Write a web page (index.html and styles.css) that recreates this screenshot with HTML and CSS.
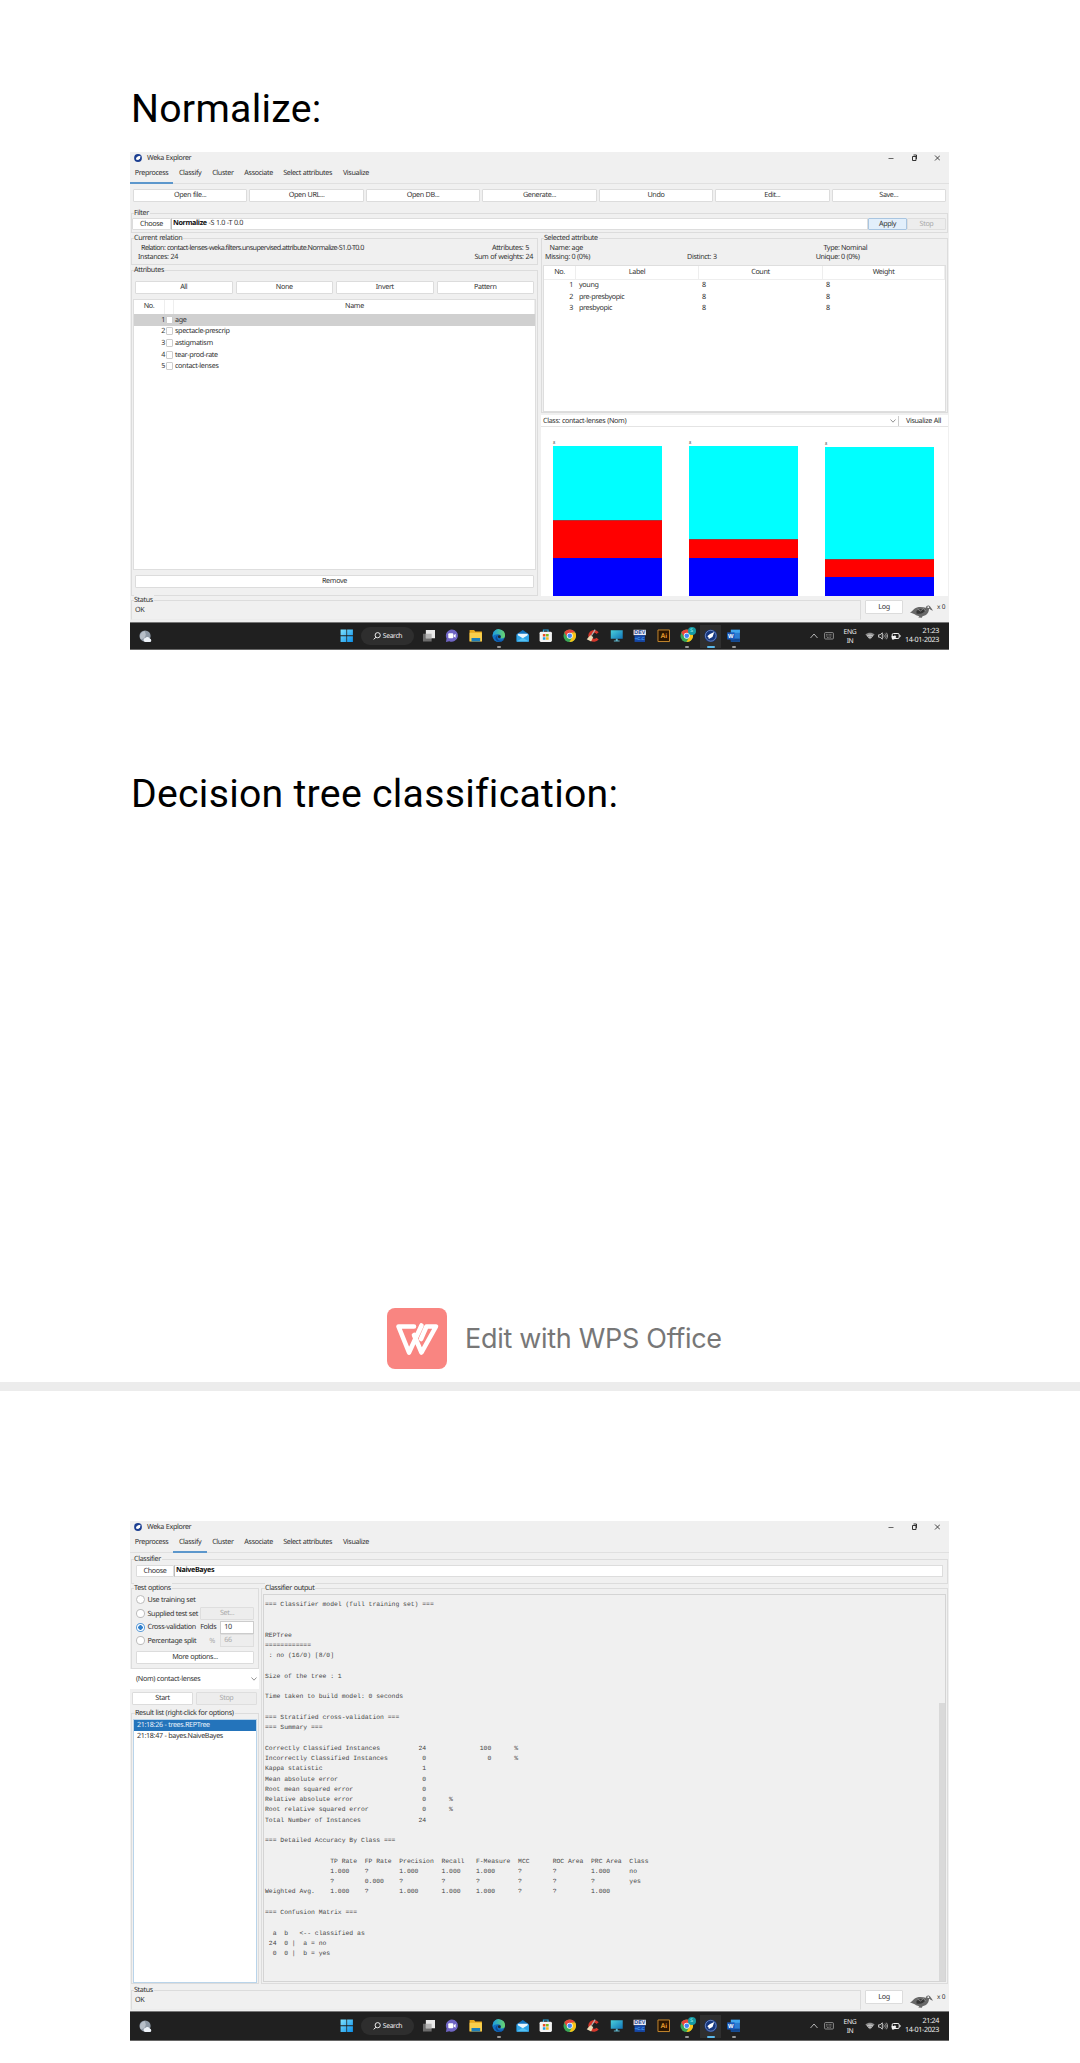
FILE: index.html
```
<!DOCTYPE html>
<html lang="en">
<head>
<meta charset="utf-8">
<title>Weka lab report</title>
<link rel="stylesheet" href="styles.css">
</head>
<body>
<svg class="defs" width="0" height="0">
  <defs>
    <linearGradient id="g-win" x1="0" y1="0" x2="1" y2="1"><stop offset="0" stop-color="#7fe3ff"/><stop offset="1" stop-color="#0a8ee8"/></linearGradient>
    <linearGradient id="g-edge" x1="0" y1="0" x2="1" y2="0"><stop offset="0" stop-color="#1c9de0"/><stop offset="1" stop-color="#6ad66a"/></linearGradient>
    <linearGradient id="g-mon" x1="0" y1="0" x2="1" y2="1"><stop offset="0" stop-color="#49d0dc"/><stop offset="1" stop-color="#1274b8"/></linearGradient>
  </defs>
  <symbol id="i-weka" viewBox="0 0 14 14"><circle cx="7" cy="7" r="6.6" fill="#16377f"/><circle cx="7" cy="7" r="5.6" fill="none" stroke="#8fa6d6" stroke-width=".7"/><path d="M10.6 3 8.8 8.4 6.8 9.3 5 10.4 4.6 8.6 3.4 7.4 5.8 5.4Z" fill="#fff"/></symbol>
  <symbol id="i-logo" viewBox="0 0 14 14"><circle cx="7" cy="7" r="6.800" fill="#1c3f92"/><path d="M11.500 3 10.500 8 7.500 10.500 4 10 3.500 7 7 4Z" fill="#fff"/></symbol>
  <symbol id="i-weather" viewBox="0 0 14 14"><circle cx="6.5" cy="6.5" r="6" fill="#8e99a6"/><path d="M6 1a6 6 0 0 0-4 9c4 0 7-4 4-9Z" fill="#b6bec8"/><path d="M6.5 13a2.2 2.2 0 0 1 .3-4.3 2.8 2.8 0 0 1 4.8.5A2 2 0 0 1 12 13Z" fill="#edf2f8"/></symbol>
  <symbol id="i-win" viewBox="0 0 14 14"><path d="M.6.4h6v6.1h-6ZM7.4.4h6v6.1h-6ZM.6 7.4h6v6.2h-6ZM7.4 7.4h6v6.2h-6Z" fill="url(#g-win)"/></symbol>
  <symbol id="i-task" viewBox="0 0 14 14"><path d="M1 5h9v8H1Z" fill="#6c6c6c"/><path d="M4 1h9.500v8.500H4Z" fill="#e9e9e9"/><path d="M4 5h6v4.500H4Z" fill="#b5b5b5"/></symbol>
  <symbol id="i-chat" viewBox="0 0 14 14"><path d="M7 .6a6.300 6.300 0 1 1-2.600 12L1 13.400l.6-3.600A6.300 6.300 0 0 1 7 .6Z" fill="#6f65c4"/><rect x="3.400" y="4.400" width="5.200" height="5.200" rx="1" fill="#fff"/><path d="m9 6.400 2-1.500v4.300L9 7.700Z" fill="#fff"/></symbol>
  <symbol id="i-folder" viewBox="0 0 14 14"><path d="M.6 1h4.700l1.200 1.600h6.900V13H.6Z" fill="#e9a91e"/><path d="M.6 4h12.800v8.800H.6Z" fill="#fbd04c"/><path d="M2.600 13V9.300h9V13Z" fill="#1f7fb8"/></symbol>
  <symbol id="i-edge" viewBox="0 0 14 14"><circle cx="7" cy="7" r="6.500" fill="#126fc0"/><path d="M.8 6A6.300 6.300 0 0 1 13.500 7c0 2.500-2.500 3.300-4.800 2.600 1-1.300.6-3.900-2.200-4.100C4 5.300 1.800 6 .8 8Z" fill="url(#g-edge)"/><path d="M6.200 6.400c-1.500 1.300-1 4.600 1.800 5.500 1.800.5 3.300 0 4.400-.8-2.500 3.400-8 2.600-8.800-1C3.300 8.200 4.600 6.800 6.200 6.400Z" fill="#0b4a96"/><circle cx="7.600" cy="8" r="1.500" fill="#20242a"/></symbol>
  <symbol id="i-mail" viewBox="0 0 14 14"><path d="M.6 5.500 7 1l6.400 4.500V13H.6Z" fill="#1272bd"/><path d="M1.800 5h10.400v5H1.800Z" fill="#eaf6fd"/><path d="M.6 5.600 7 9.600l6.400-4V13H.6Z" fill="#2fa4e7"/><path d="M.6 13 7 9l6.400 4Z" fill="#52c1f4"/></symbol>
  <symbol id="i-store" viewBox="0 0 14 14"><path d="M4.600 3V1h4.800v2" fill="none" stroke="#2aa3d8" stroke-width="1.200"/><rect x=".6" y="2.800" width="12.800" height="10.600" rx="1.500" fill="#f4f4f4"/><path d="M4 5.200h2.700v2.700H4Z" fill="#e8502a"/><path d="M7.300 5.200H10v2.700H7.300Z" fill="#7eb61b"/><path d="M4 8.500h2.700v2.700H4Z" fill="#229fe0"/><path d="M7.300 8.500H10v2.700H7.300Z" fill="#f5b81c"/></symbol>
  <symbol id="i-chrome" viewBox="0 0 14 14"><circle cx="7" cy="7" r="6.500" fill="#3aa757"/><path d="M1.370 3.750A6.500 6.500 0 0 1 12.630 3.750L7 4.500 4.400 8.500Z" fill="#e8453c"/><path d="M12.630 3.750A6.500 6.500 0 0 1 6.700 13.500L9.600 8.500 8.500 3.750Z" fill="#fbc116"/><circle cx="7" cy="7" r="3.100" fill="#fff"/><circle cx="7" cy="7" r="2.400" fill="#4285f4"/></symbol>
  <symbol id="i-cc" viewBox="0 0 14 14"><path d="M12 4.200A4.600 4.600 0 1 0 12 10" fill="none" stroke="#d3362b" stroke-width="3"/><path d="M9.500.6 5.600 7" stroke="#b8b8b8" stroke-width="1.200"/><path d="m4.500 6.400 3 2-2.200 4.600-4.500-2.400Z" fill="#eddcb8"/></symbol>
  <symbol id="i-mon" viewBox="0 0 14 14"><path d="M.8 1.400h12.400v8.800H.8Z" fill="url(#g-mon)"/><path d="M6 10h2v2H6ZM4 12h6v1H4Z" fill="#5fb6cc"/></symbol>
  <symbol id="i-bird" viewBox="0 0 24 16"><path d="M.5 9.500C3 8.500 4 5.500 7.500 4.500c3.500-1 6-.2 9 .2 0-1.600 1.600-2.600 3.200-2 1.400.8 2.200 2.600 3.800 5-2-.4-3-1.800-4-2C19.500 9 17.500 12.500 13 13.200l-.6 1.500-3.600-.2 1-1.300C6.500 12.800 5 10.600.5 9.500Z" fill="#686868"/><path d="M7 8c3-2.500 7-2 9-1.500-1 3.500-5 5-9 4Z" fill="#353535"/><path d="M8 6 11 8l3-2.500 2 2.500" stroke="#999" fill="none" stroke-width=".8"/><circle cx="18.800" cy="4.200" r=".9" fill="#eee"/></symbol>
  <symbol id="i-kbd" viewBox="0 0 10 8"><rect x=".6" y=".6" width="8.800" height="6.400" rx=".8" fill="none" stroke="#a5a5a5" stroke-width=".8"/><path d="M2 2.600h6M2 4h6M3 5.500h4" stroke="#a5a5a5" stroke-width=".7" stroke-dasharray=".9 .5"/></symbol>
  <symbol id="i-wifi" viewBox="0 0 10 8"><path d="M5 7.600.4 2.600C3 .1 7 .1 9.600 2.600Z" fill="#8b8b8b"/><path d="M2 4.200c1.700-1.500 4.300-1.500 6 0M3.400 5.700c1-.8 2.200-.8 3.200 0" fill="none" stroke="#e8e8e8" stroke-width=".8"/></symbol>
  <symbol id="i-vol" viewBox="0 0 10 8"><path d="M.6 2.800h1.500L4.300.8v6.400L2.100 5.200H.6Z" fill="none" stroke="#ededed" stroke-width=".8"/><path d="M5.600 2.500c.8.900.8 2.100 0 3M7 1.500c1.500 1.500 1.500 3.500 0 5M8.300.7c1.700 2 1.700 4.600 0 6.600" fill="none" stroke="#d4d4d4" stroke-width=".7"/></symbol>
  <symbol id="i-bat" viewBox="0 0 10 8"><rect x="1.200" y="1.500" width="7" height="5" rx="1.300" fill="none" stroke="#f2f2f2" stroke-width="1"/><path d="M8.600 3h.9v2h-.9Z" fill="#f2f2f2"/><path d="M.6 4h3V2.600L5.400 5 3 7.600H1Z" fill="#f2f2f2"/></symbol>
</svg>

<main class="doc">
  <h1 class="heading heading-first">Normalize:</h1>

  <section class="shot shot-pre">
    <div class="app">
      <header class="titlebar"><svg class="logo"><use href="#i-logo"/></svg><span>Weka Explorer</span>
        <svg class="winctl" viewBox="0 0 52 8"><path d="M.5 4.500h5" stroke="#666"/><path d="M24.500 2.500h3.500v4h-3.500ZM25.500 1h3v4" fill="none" stroke="#333" stroke-width="1"/><path d="m47 1.500 5 5m0-5-5 5" stroke="#333" stroke-width=".9"/></svg>
      </header>
      <nav class="tabs"><span class="on">Preprocess</span><span>Classify</span><span>Cluster</span><span>Associate</span><span>Select attributes</span><span>Visualize</span></nav>
      <div class="toolbar"><b>Open file...</b><b>Open URL...</b><b>Open DB...</b><b>Generate...</b><b>Undo</b><b>Edit...</b><b>Save...</b></div>

      <div class="group filter">
        <span class="legend">Filter</span>
        <div class="chooser"><b class="btn">Choose</b><div class="field"><strong>Normalize</strong> -S 1.0 -T 0.0</div><b class="btn apply">Apply</b><b class="btn off">Stop</b></div>
      </div>

      <div class="split">
        <div class="left">
          <div class="group relation">
            <span class="legend">Current relation</span>
            <div class="pair"><span class="in">Relation: contact-lenses-weka.filters.unsupervised.attribute.Normalize-S1.0-T0.0</span><span class="in2">Attributes: 5</span></div>
            <div class="pair"><span>Instances: 24</span><span>Sum of weights: 24</span></div>
          </div>
          <div class="group attrs">
            <span class="legend">Attributes</span>
            <div class="four"><b class="btn">All</b><b class="btn">None</b><b class="btn">Invert</b><b class="btn">Pattern</b></div>
            <div class="table">
              <div class="arow head"><span>No.</span><span></span><span>Name</span></div>
              <div class="arow sel"><span>1</span><i></i><span>age</span></div>
              <div class="arow"><span>2</span><i></i><span>spectacle-prescrip</span></div>
              <div class="arow"><span>3</span><i></i><span>astigmatism</span></div>
              <div class="arow"><span>4</span><i></i><span>tear-prod-rate</span></div>
              <div class="arow"><span>5</span><i></i><span>contact-lenses</span></div>
            </div>
            <b class="btn remove">Remove</b>
          </div>
        </div>
        <div class="right">
          <div class="group selected">
            <span class="legend">Selected attribute</span>
            <div class="facts"><span class="k">Name:</span><span>age</span><span></span><span class="k">Type:</span><span>Nominal</span>
              <span class="k">Missing:</span><span>0 (0%)</span><span>Distinct: 3</span><span class="k">Unique:</span><span>0 (0%)</span></div>
            <div class="table">
              <div class="lrow head"><span>No.</span><span>Label</span><span>Count</span><span>Weight</span></div>
              <div class="lrow"><span>1</span><span>young</span><span>8</span><span>8</span></div>
              <div class="lrow"><span>2</span><span>pre-presbyopic</span><span>8</span><span>8</span></div>
              <div class="lrow"><span>3</span><span>presbyopic</span><span>8</span><span>8</span></div>
            </div>
          </div>
          <div class="classbar"><span>Class: contact-lenses (Nom)</span><svg class="chev" viewBox="0 0 6 4"><path d="m.5.500 2.500 2.700L5.500.5" fill="none" stroke="#777" stroke-width=".8"/></svg><b>Visualize All</b></div>
          <div class="chart">
            <div class="bar"><em>8</em><i class="c" style="height:74.500px"></i><i class="r" style="height:37.500px"></i><i class="b" style="height:38.500px"></i></div>
            <div class="bar"><em>8</em><i class="c" style="height:93px"></i><i class="r" style="height:18.500px"></i><i class="b" style="height:38.500px"></i></div>
            <div class="bar"><em>8</em><i class="c" style="height:112px"></i><i class="r" style="height:18.500px"></i><i class="b" style="height:19px"></i></div>
          </div>
        </div>
      </div>

      <footer class="status"><div class="group"><span class="legend">Status</span><p>OK</p></div><b class="btn">Log</b><svg class="bird"><use href="#i-bird"/></svg><span>x 0</span></footer>
    </div>
    <div class="taskbar">
      <svg class="weather"><use href="#i-weather"/></svg>
      <div class="dock">
        <span><svg><use href="#i-win"/></svg></span>
        <div class="search"><svg viewBox="0 0 8 8"><circle cx="4.700" cy="3.200" r="2.600" fill="none" stroke="#fff" stroke-width=".9"/><path d="M2.900 5.200.8 7.400" stroke="#fff"/></svg>Search</div>
        <span><svg><use href="#i-task"/></svg></span><span><svg><use href="#i-chat"/></svg></span><span><svg><use href="#i-folder"/></svg></span><span class="run"><svg><use href="#i-edge"/></svg></span><span><svg><use href="#i-mail"/></svg></span><span><svg><use href="#i-store"/></svg></span><span><svg><use href="#i-chrome"/></svg></span><span><svg><use href="#i-cc"/></svg></span><span><svg><use href="#i-mon"/></svg></span>
        <span><svg viewBox="0 0 14 14"><path d="M.6.8h12.800v5.600H.6Z" fill="#e9ecf6"/><path d="M1.600 6.400h10.800v7H1.600Z" fill="#1648a8"/><text x="7" y="5.600" class="ico-dev">DEV</text><text x="7" y="11.600" class="ico-cpp">+C.C</text></svg></span>
        <span><svg viewBox="0 0 14 14"><path d="M1 1h12v12H1Z" fill="#2b1600" stroke="#c98a2e" stroke-width="1"/><text x="7" y="9.600" class="ico-ai">Ai</text></svg></span>
        <span class="run badge"><svg><use href="#i-chrome"/></svg></span><span class="run cur"><svg><use href="#i-weka"/></svg></span>
        <span class="run"><svg viewBox="0 0 14 14"><path d="M4 .8h9.400v12.400H4Z" fill="#2b7cd3"/><path d="M4 .8h9.400v3.100H4Z" fill="#41a5ee"/><path d="M4 10h9.400v3.200H4Z" fill="#12468f"/><path d="M.2 3.500h7.600v7.400H.2Z" fill="#185abd"/><text x="4" y="9.200" class="ico-word">W</text></svg></span>
      </div>
      <div class="tray"><svg viewBox="0 0 10 8"><path d="m1.500 6 3.500-4L8.500 6" fill="none" stroke="#d8d8d8" stroke-width=".8"/></svg><svg><use href="#i-kbd"/></svg><p class="lang">ENG<br>IN</p><svg><use href="#i-wifi"/></svg><svg><use href="#i-vol"/></svg><svg><use href="#i-bat"/></svg><p class="clock">21:23<br>14-01-2023</p></div>
    </div>
  </section>

  <h1 class="heading heading-second">Decision tree classification:</h1>

  <div class="wps"><svg viewBox="0 0 60 61"><rect width="60" height="61" rx="8" fill="#f98581"/><path d="M27 18.500H11.500L22 44.500 34.500 17.500M27 27l7.500 17.500L49 18.500H39.500L34 31" fill="none" stroke="#fff" stroke-width="4.600" stroke-linejoin="round" stroke-linecap="round"/></svg><span>Edit with WPS Office</span></div>
  <hr class="pagebreak">

  <section class="shot shot-cls">
    <div class="app">
      <header class="titlebar"><svg class="logo"><use href="#i-logo"/></svg><span>Weka Explorer</span>
        <svg class="winctl" viewBox="0 0 52 8"><path d="M.5 4.500h5" stroke="#666"/><path d="M24.500 2.500h3.500v4h-3.500ZM25.500 1h3v4" fill="none" stroke="#333" stroke-width="1"/><path d="m47 1.500 5 5m0-5-5 5" stroke="#333" stroke-width=".9"/></svg>
      </header>
      <nav class="tabs"><span>Preprocess</span><span class="on">Classify</span><span>Cluster</span><span>Associate</span><span>Select attributes</span><span>Visualize</span></nav>
      <div class="group classifier">
        <span class="legend">Classifier</span>
        <div class="chooser"><b class="btn">Choose</b><div class="field"><strong>NaiveBayes</strong></div></div>
      </div>
      <div class="work">
        <div class="side">
          <div class="group options">
            <span class="legend">Test options</span>
            <div class="opt"><i></i><span>Use training set</span></div>
            <div class="opt"><i></i><span>Supplied test set</span><b class="btn off wide">Set...</b></div>
            <div class="opt"><i class="checked"></i><span>Cross-validation</span><em>Folds</em><b class="input">10</b></div>
            <div class="opt"><i></i><span>Percentage split</span><em class="dim">%</em><b class="input off">66</b></div>
            <b class="btn more">More options...</b>
          </div>
          <div class="combo"><span>(Nom) contact-lenses</span><svg class="chev" viewBox="0 0 6 4"><path d="m.5.500 2.500 2.700L5.500.5" fill="none" stroke="#777" stroke-width=".8"/></svg></div>
          <div class="run-row"><b class="btn">Start</b><b class="btn off">Stop</b></div>
          <div class="group results">
            <span class="legend">Result list (right-click for options)</span>
            <ul><li class="sel">21:18:26 - trees.REPTree</li><li>21:18:47 - bayes.NaiveBayes</li></ul>
          </div>
        </div>
        <div class="group output">
          <span class="legend">Classifier output</span>
          <div class="console"><pre>=== Classifier model (full training set) ===


REPTree
============
 : no (16/0) [8/0]

Size of the tree : 1

Time taken to build model: 0 seconds

=== Stratified cross-validation ===
=== Summary ===

Correctly Classified Instances          24              100      %
Incorrectly Classified Instances         0                0      %
Kappa statistic                          1
Mean absolute error                      0
Root mean squared error                  0
Relative absolute error                  0      %
Root relative squared error              0      %
Total Number of Instances               24

=== Detailed Accuracy By Class ===

                 TP Rate  FP Rate  Precision  Recall   F-Measure  MCC      ROC Area  PRC Area  Class
                 1.000    ?        1.000      1.000    1.000      ?        ?         1.000     no
                 ?        0.000    ?          ?        ?          ?        ?         ?         yes
Weighted Avg.    1.000    ?        1.000      1.000    1.000      ?        ?         1.000

=== Confusion Matrix ===

  a  b   &lt;-- classified as
 24  0 |  a = no
  0  0 |  b = yes</pre><div class="thumb"></div></div>
        </div>
      </div>
      <footer class="status"><div class="group"><span class="legend">Status</span><p>OK</p></div><b class="btn">Log</b><svg class="bird"><use href="#i-bird"/></svg><span>x 0</span></footer>
    </div>
    <div class="taskbar">
      <svg class="weather"><use href="#i-weather"/></svg>
      <div class="dock">
        <span><svg><use href="#i-win"/></svg></span>
        <div class="search"><svg viewBox="0 0 8 8"><circle cx="4.700" cy="3.200" r="2.600" fill="none" stroke="#fff" stroke-width=".9"/><path d="M2.900 5.200.8 7.400" stroke="#fff"/></svg>Search</div>
        <span><svg><use href="#i-task"/></svg></span><span><svg><use href="#i-chat"/></svg></span><span><svg><use href="#i-folder"/></svg></span><span class="run"><svg><use href="#i-edge"/></svg></span><span><svg><use href="#i-mail"/></svg></span><span><svg><use href="#i-store"/></svg></span><span><svg><use href="#i-chrome"/></svg></span><span><svg><use href="#i-cc"/></svg></span><span><svg><use href="#i-mon"/></svg></span>
        <span><svg viewBox="0 0 14 14"><path d="M.6.8h12.800v5.600H.6Z" fill="#e9ecf6"/><path d="M1.600 6.400h10.800v7H1.600Z" fill="#1648a8"/><text x="7" y="5.600" class="ico-dev">DEV</text><text x="7" y="11.600" class="ico-cpp">+C.C</text></svg></span>
        <span><svg viewBox="0 0 14 14"><path d="M1 1h12v12H1Z" fill="#2b1600" stroke="#c98a2e" stroke-width="1"/><text x="7" y="9.600" class="ico-ai">Ai</text></svg></span>
        <span class="run badge"><svg><use href="#i-chrome"/></svg></span><span class="run cur"><svg><use href="#i-weka"/></svg></span>
        <span class="run"><svg viewBox="0 0 14 14"><path d="M4 .8h9.400v12.400H4Z" fill="#2b7cd3"/><path d="M4 .8h9.400v3.100H4Z" fill="#41a5ee"/><path d="M4 10h9.400v3.200H4Z" fill="#12468f"/><path d="M.2 3.500h7.600v7.400H.2Z" fill="#185abd"/><text x="4" y="9.200" class="ico-word">W</text></svg></span>
      </div>
      <div class="tray"><svg viewBox="0 0 10 8"><path d="m1.500 6 3.500-4L8.500 6" fill="none" stroke="#d8d8d8" stroke-width=".8"/></svg><svg><use href="#i-kbd"/></svg><p class="lang">ENG<br>IN</p><svg><use href="#i-wifi"/></svg><svg><use href="#i-vol"/></svg><svg><use href="#i-bat"/></svg><p class="clock">21:24<br>14-01-2023</p></div>
    </div>
  </section>
</main>
</body>
</html>
```

FILE: styles.css
```
* { box-sizing: border-box; margin: 0; padding: 0; }
body { background: #fff; color: #000; font-family: "Noto Sans", sans-serif; }
.defs { position: absolute; }
.doc { width: 1080px; height: 2063px; overflow: hidden; display: flex; flex-direction: column; }
.doc > * { flex: none; }

.heading { font: 400 39.2px/46px Roboto, sans-serif; padding-left: 131px; white-space: nowrap; letter-spacing: .28px; }
.heading-first { margin-top: 86px; }
.heading-second { margin-top: 121px; }

/* application window */
.shot { width: 819px; margin-left: 130px; font-size: 7.200px; line-height: 10px; letter-spacing: -.36px; word-spacing: .3px; text-rendering: geometricPrecision; color: #333; white-space: nowrap; display: flex; flex-direction: column; }
.shot b { font-weight: 400; }
.shot-pre { height: 498px; margin-top: 20px; }
.shot-cls { height: 520px; margin-top: 130px; }
.app { background: #f0f0f0; flex: 1; display: flex; flex-direction: column; min-height: 0; }
.titlebar { height: 12px; display: flex; align-items: center; padding: 0 9px 0 4px; gap: 5px; flex: none; }
.logo { width: 8px; height: 8px; }
.winctl { width: 52px; height: 8px; margin-left: auto; }
.tabs { height: 20px; display: flex; border-bottom: 1px solid #e0e0e0; flex: none; }
.tabs span { text-align: center; padding-top: 4px; height: 20px; width: 43.300px; }
.tabs span:nth-child(2) { width: 33.600px; }
.tabs span:nth-child(3) { width: 32px; }
.tabs span:nth-child(4) { width: 39.500px; }
.tabs span:nth-child(5) { width: 58.500px; }
.tabs span:nth-child(6) { width: 38px; }
.tabs .on { border-bottom: 2px solid #5c97cc; }
.toolbar { display: grid; grid-template-columns: repeat(7, 1fr); gap: 2px; padding: 5px 3px 0; height: 18px; flex: none; }
.toolbar b, .btn { background: #fff; border: 1px solid #dcdcdc; border-radius: 1px; text-align: center; height: 13px; line-height: 11px; display: block; }
.btn.off, .input.off { background: #ededed; color: #aaa; border-color: #dedede; }
.btn.apply { background: #e2effb; border-color: #a9c5e0; }

.group { border: 1px solid #dcdcdc; min-width: 0; }
.legend { display: block; width: fit-content; height: 10px; margin: -6px 0 0 2px; padding-right: 1px; background: #f0f0f0; }
.filter { margin: 11px 1px 0; height: 20px; padding-right: 1px; flex: none; }
.chooser { display: flex; }
.filter .btn { height: 12px; line-height: 10px; }
.filter .btn:first-child { width: 39px; }
.filter .btn.apply { width: 39px; }
.filter .btn.off { width: 39px; }
.field { flex: 1; background: #fff; border: 1px solid #ddd; border-left-color: #bbb; height: 12px; line-height: 9.500px; padding-left: 1px; }
.field strong { color: #111; font-weight: 700; }

.split { display: flex; margin-top: 5px; height: 358px; flex: none; }
.left { width: 408px; padding-left: 1px; }
.relation { height: 27px; }
.pair { display: flex; justify-content: space-between; height: 9px; line-height: 9px; padding: 0 4px 0 6px; }
.pair:nth-child(2) { margin-top: 1px; }
.pair .in { padding-left: 3px; letter-spacing: -.585px; }
.pair .in2 { padding-right: 4px; }
.attrs { margin-top: 5px; height: 326px; padding: 0 1px; }
.attrs .legend { margin-left: 1px; }
.four { display: grid; grid-template-columns: repeat(4, 1fr); gap: 3px; padding: 0 2px; margin-top: 6px; }
.table { background: #fff; border: 1px solid #dedede; }
.attrs .table { margin-top: 5px; height: 271px; }
.arow { display: grid; grid-template-columns: 31px 9px 1fr; height: 11.600px; align-items: center; }
.arow span:first-child { text-align: right; }
.arow i { width: 7px; height: 8px; background: #fff; border: 1px solid #ccc; border-radius: 1px; margin-left: 1px; }
.arow span:last-child { padding-left: 1px; }
.arow.head { height: 14px; align-items: stretch; line-height: 13px; }
.arow.head span, .arow.head span:first-child { text-align: center; border-right: 1px solid #eee; }
.arow.sel { background: #d0d0d0; }
.remove { margin: 5px 2px 0; }

.right { flex: 1; padding: 0 1px 0 3px; display: flex; flex-direction: column; }
.selected { height: 175px; flex: none; }
.facts { display: grid; grid-template-columns: 28px 114px 119px 32px 1fr; column-gap: 1.500px; line-height: 9px; height: 18px; margin-top: 1px; grid-template-rows: 9px 9px; }
.facts .k { text-align: right; }
.selected .table { margin: 3px 1px 0; height: 147px; }
.lrow { display: grid; grid-template-columns: 32px 123px 124px 1fr; height: 11.500px; line-height: 11.500px; }
.lrow span { padding-left: 3px; }
.lrow span:first-child { text-align: right; padding: 0 3px 0 0; }
.lrow.head { height: 14px; line-height: 13px; border-bottom: 1px solid #eee; }
.lrow.head span, .lrow.head span:first-child { text-align: center; border-right: 1px solid #eee; padding: 0; }
.classbar { height: 12px; margin-top: 2px; background: #fff; display: flex; align-items: center; padding-left: 2px; border-bottom: 1px solid #e4e4e4; flex: none; }
.chev { width: 6px; height: 4px; margin-left: auto; margin-right: 2px; }
.classbar b { width: 50px; text-align: center; border-left: 1px solid #ccc; }
.chart { background: #fff; flex: 1; display: grid; grid-template-columns: repeat(3, 109px); column-gap: 27px; padding-left: 12px; align-items: end; }
.bar { display: flex; flex-direction: column; }
.bar em { font: 400 4px/4px "Noto Sans", sans-serif; height: 4px; }
.bar i { display: block; }
.bar .c { background: #0ff; }
.bar .r { background: #f00; border-top: 1px solid #a33; }
.bar .b { background: #00f; }

.status { display: flex; padding: 4px 3px 0 1px; height: 26px; flex: none; margin-top: auto; }
.status .group { width: 730px; height: 20px; border-bottom-color: #ececec; }
.status p { padding-left: 3px; }
.status .btn { width: 38px; height: 14px; line-height: 12px; margin: 0 6px 0 4px; }
.bird { width: 25px; height: 16px; margin-top: 3px; }
.status > span { margin: 2px 0 0 3px; font-size: 6.500px; }

/* Windows taskbar */
.taskbar { height: 28px; background: #202020; border-top: 1px solid #777; border-bottom: 1px solid #666; display: grid; grid-template-columns: 205px 1fr auto; align-items: center; color: #eee; flex: none; }
.shot-cls .taskbar { height: 30px; }
.weather { width: 13px; height: 13px; margin-left: 9px; }
.dock { display: flex; align-items: center; height: 100%; }
.dock > span { width: 23.500px; height: 23px; display: grid; place-items: center; position: relative; }
.dock > span svg { width: 13.500px; height: 13.500px; }
.search { width: 53px; height: 18px; border-radius: 9px; background: #2e2e2e; margin: 0 2.500px 0 2.500px; display: flex; align-items: center; justify-content: center; gap: 2px; font-size: 6.800px; }
.search svg { width: 8px; height: 8px; }
.dock .run::after { content: ""; position: absolute; left: 10px; bottom: 0; width: 4px; height: 2px; background: #999; border-radius: 1px; }
.dock .cur { background: linear-gradient(#2f2f2f, #2f2f2f) center / 21px 100% no-repeat; }
.dock .cur::after { left: 8px; width: 8px; background: #5bb8ea; }
.dock .badge::before { content: "S"; position: absolute; right: 3px; top: 2px; width: 8px; height: 8px; border-radius: 4px; background: #159aa3; z-index: 1; font-size: 5px; line-height: 8px; text-align: center; color: #bff; }
.tray { display: flex; align-items: center; padding-right: 10px; line-height: 9px; }
.tray svg { width: 10px; height: 8px; margin-right: 3px; }
.tray svg:nth-child(1) { margin-right: 5px; }
.tray .lang { width: 18px; text-align: center; margin: 0 6px 0 4px; font-size: 6.800px; }
.tray .clock { text-align: right; margin-left: 1px; width: 34px; }
.ico-dev { font: 700 5.500px "Liberation Sans", sans-serif; fill: #1d3f8f; text-anchor: middle; letter-spacing: 0; }
.ico-cpp { font: 700 4.500px "Liberation Sans", sans-serif; fill: #4aa0f0; text-anchor: middle; letter-spacing: 0; }
.ico-ai { font: 700 7px "Liberation Sans", sans-serif; fill: #f0a030; text-anchor: middle; letter-spacing: 0; }
.ico-word { font: 700 6px "Liberation Sans", sans-serif; fill: #fff; text-anchor: middle; letter-spacing: 0; }

/* page footer mark */
.wps { display: flex; align-items: center; margin: 491px 0 0 387px; height: 61px; gap: 18px; font: 400 27px/40px Inter, sans-serif; color: #777; letter-spacing: -.3px; white-space: nowrap; }
.wps svg { width: 60px; height: 61px; }
.pagebreak { border: 0; height: 9px; margin-top: 13px; background: #ececec; }

/* classify tab */
.classifier { margin: 6px 1px 0; height: 25px; padding: 0 4px 0 4px; flex: none; }
.classifier .legend { margin-left: -2px; }
.classifier .chooser { margin-top: 1px; }
.classifier .btn { width: 38px; height: 12px; line-height: 10px; }
.work { display: flex; gap: 2px; margin: 4px 1px 0; height: 396px; flex: none; }
.side { width: 128px; }
.options { height: 81px; padding: 0 4px; }
.options .legend { margin: -6px 0 0 -2px; }
.opt { display: flex; align-items: center; height: 13.700px; }
.opt i { width: 9px; height: 9px; border: 1px solid #bbb; border-radius: 50%; background: #fff; margin-right: 2.500px; }
.opt i.checked { border-color: #5a9bd8; background: radial-gradient(#2f7fcc 0 2px, #fff 2.500px); }
.opt span { width: 53px; }
.opt em { font-style: normal; width: 20px; }
.opt .dim { color: #aaa; padding-left: 9px; }
.opt .wide { width: 54px; margin-left: auto; }
.input { margin-left: auto; width: 34px; height: 13px; line-height: 11px; padding-left: 3px; background: #fff; border: 1px solid #ccc; }
.more { margin-top: 3px; }
.combo { height: 20px; background: #fff; margin-left: -1px; padding-left: 6px; display: flex; align-items: center; }
.run-row { display: grid; grid-template-columns: 61px 61px; gap: 3px; padding: 3px 0 0 1px; }
.results { height: 271px; margin-top: 8px; padding: 0 1px; }
.results ul { list-style: none; background: #fff; border: 1px solid #b9d4ea; height: 264px; margin-top: 1px; }
.results li { height: 11px; line-height: 11px; padding-left: 3px; }
.results .sel { background: #2474bb; color: #e4f0fa; }
.output { flex: 1; height: 396px; padding: 0 1px; }
.console { border: 1px solid #d4d4d4; height: 388px; margin-top: 1px; display: flex; justify-content: space-between; align-items: flex-end; }
.console pre { align-self: flex-start; font: 400 6.400px/10.265px "Liberation Mono", monospace; letter-spacing: 0; word-spacing: 0; padding: 5px 0 0 1px; color: #444; }
.thumb { width: 6px; height: 278px; background: #d9d9d9; }
.shot-cls .status { height: 25px; }
```
